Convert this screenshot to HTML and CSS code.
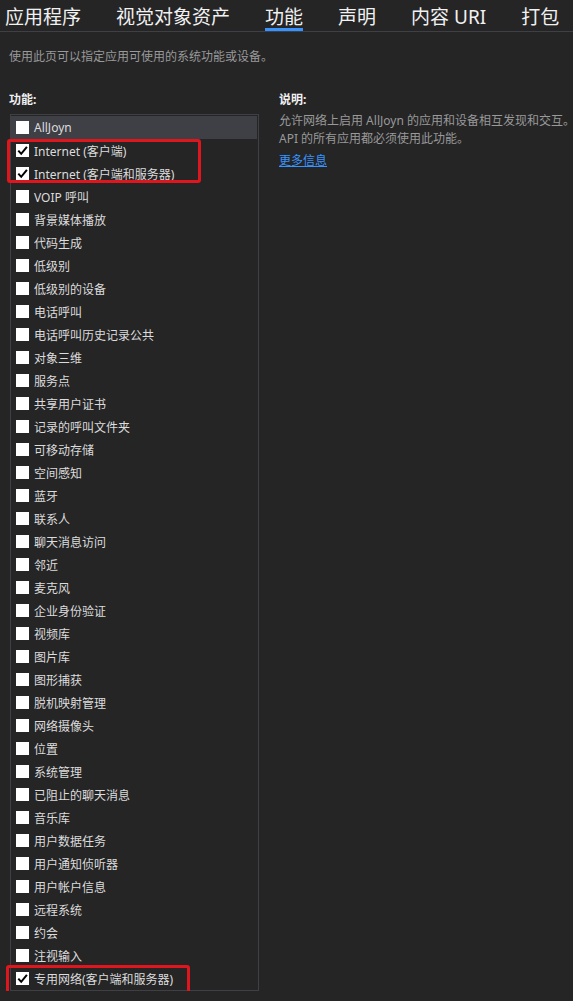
FILE: index.html
```html
<!DOCTYPE html>
<html lang="zh-CN">

<head>
    <meta charset="UTF-8">
    <meta name="viewport" content="width=device-width, initial-scale=1.0">
    <title>Package.appxmanifest - 功能</title>
    <link rel="stylesheet" href="styles.css">
</head>

<body>
    <div class="tabs">
        <div class="tab">应用程序</div>
        <div class="tab">视觉对象资产</div>
        <div class="tab active">功能</div>
        <div class="tab">声明</div>
        <div class="tab">内容 URI</div>
        <div class="tab">打包</div>
    </div>

    <div class="page">
        <p class="intro">使用此页可以指定应用可使用的系统功能或设备。</p>

        <div class="columns">
            <div class="left">
                <div class="heading">功能:</div>
                <ul class="caps">
                    <li class="selected"><span class="box"></span>AllJoyn</li>
                    <li><span class="box checked"></span>Internet (客户端)</li>
                    <li><span class="box checked"></span>Internet (客户端和服务器)</li>
                    <li><span class="box"></span>VOIP 呼叫</li>
                    <li><span class="box"></span>背景媒体播放</li>
                    <li><span class="box"></span>代码生成</li>
                    <li><span class="box"></span>低级别</li>
                    <li><span class="box"></span>低级别的设备</li>
                    <li><span class="box"></span>电话呼叫</li>
                    <li><span class="box"></span>电话呼叫历史记录公共</li>
                    <li><span class="box"></span>对象三维</li>
                    <li><span class="box"></span>服务点</li>
                    <li><span class="box"></span>共享用户证书</li>
                    <li><span class="box"></span>记录的呼叫文件夹</li>
                    <li><span class="box"></span>可移动存储</li>
                    <li><span class="box"></span>空间感知</li>
                    <li><span class="box"></span>蓝牙</li>
                    <li><span class="box"></span>联系人</li>
                    <li><span class="box"></span>聊天消息访问</li>
                    <li><span class="box"></span>邻近</li>
                    <li><span class="box"></span>麦克风</li>
                    <li><span class="box"></span>企业身份验证</li>
                    <li><span class="box"></span>视频库</li>
                    <li><span class="box"></span>图片库</li>
                    <li><span class="box"></span>图形捕获</li>
                    <li><span class="box"></span>脱机映射管理</li>
                    <li><span class="box"></span>网络摄像头</li>
                    <li><span class="box"></span>位置</li>
                    <li><span class="box"></span>系统管理</li>
                    <li><span class="box"></span>已阻止的聊天消息</li>
                    <li><span class="box"></span>音乐库</li>
                    <li><span class="box"></span>用户数据任务</li>
                    <li><span class="box"></span>用户通知侦听器</li>
                    <li><span class="box"></span>用户帐户信息</li>
                    <li><span class="box"></span>远程系统</li>
                    <li><span class="box"></span>约会</li>
                    <li><span class="box"></span>注视输入</li>
                    <li><span class="box checked"></span>专用网络(客户端和服务器)</li>
                </ul>
                <!-- red markers drawn over the list -->
                <div class="mark mark-internet"></div>
                <div class="mark mark-private"></div>
            </div>

            <div class="right">
                <div class="heading">说明:</div>
                <p class="desc">
                    <span class="line">允许网络上启用 AllJoyn 的应用和设备相互发现和交互。</span>
                    <span class="line">API 的所有应用都必须使用此功能。</span>
                </p>
                <a class="more" href="#">更多信息</a>
            </div>
        </div>
    </div>
</body>

</html>
```

FILE: styles.css
```css
body {
    margin: 0;
    padding: 0;
    background-color: #252526;
    color: #dcdcdc;
    font-family: "Noto Sans", "Noto Sans CJK SC", sans-serif;
    font-size: 12px;
    overflow: hidden;
}

.tabs {
    display: flex;
    gap: 35px;
    padding-left: 5px;
    border-bottom: 1px solid #3f3f46;
    white-space: nowrap;
}

.tab {
    font-size: 19px;
    line-height: 22px;
    padding-top: 6px;
    color: #f1f1f1;
    border-bottom: 3px solid transparent;
}

.tab.active {
    border-bottom-color: #3794ff;
}

.page {
    padding: 16px 9px 0;
}

.intro {
    margin: 0;
    line-height: 18px;
    color: #999999;
}

.columns {
    display: flex;
    margin-top: 25px;
}

.left {
    position: relative;
    width: 250px;
    flex-shrink: 0;
}

.heading {
    font-weight: bold;
    line-height: 18px;
    color: #f1f1f1;
}

.caps {
    list-style: none;
    margin: 5px 0 0 1px;
    padding: 1px 1px 0 0;
    width: 246px;
    border: 1px solid #3f3f46;
}

.caps li {
    display: flex;
    align-items: center;
    height: 23px;
    padding-left: 5px;
    white-space: nowrap;
}

.caps li.selected {
    background-color: #3f3f46;
}

.box {
    width: 13px;
    height: 13px;
    margin-right: 5px;
    background-color: #ffffff;
    flex-shrink: 0;
}

.box.checked {
    background-image: url("data:image/svg+xml,%3Csvg xmlns='http://www.w3.org/2000/svg' viewBox='0 0 13 13'%3E%3Cpath d='M2.3 6.6 L5.2 9.8 L10.9 2.8' fill='none' stroke='%23000' stroke-width='2'/%3E%3C/svg%3E");
}

.mark {
    position: absolute;
    border: 3px solid #e0161e;
    border-radius: 3px;
    box-sizing: border-box;
}

.mark-internet {
    left: -2px;
    top: 48px;
    width: 194px;
    height: 44px;
}

.mark-private {
    left: -3px;
    top: 874px;
    width: 184px;
    height: 31px;
}

.right {
    margin-left: 20px;
    white-space: nowrap;
}

.desc {
    margin: 3px 0 0;
    line-height: 18px;
    color: #999999;
}

.desc .line {
    display: block;
}

.more {
    display: inline-block;
    margin-top: 4px;
    line-height: 18px;
    color: #3794ff;
}
```
